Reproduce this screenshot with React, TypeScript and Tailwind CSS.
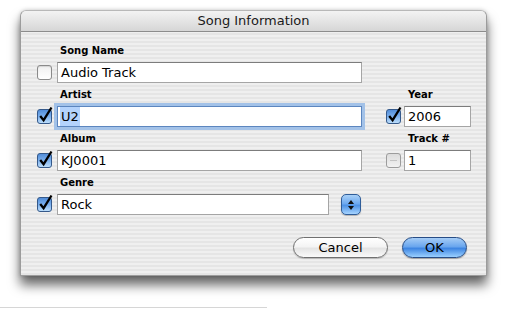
import React from "react";

const font = { fontFamily: '"DejaVu Sans", "Liberation Sans", sans-serif' };

const CheckOn = () => (
  <div className="relative w-[15px] h-[15px] shrink-0">
    <svg width="18" height="19" viewBox="0 0 18 19" className="absolute left-0 top-[-3px] overflow-visible">
      <defs>
        <linearGradient id="aqcb" x1="0" y1="0" x2="0" y2="1">
          <stop offset="0" stopColor="#4f8ad6" />
          <stop offset="0.45" stopColor="#76acec" />
          <stop offset="1" stopColor="#c0e0fb" />
        </linearGradient>
      </defs>
      <rect x="0.5" y="3.5" width="14" height="14" rx="2.5" fill="url(#aqcb)" stroke="#35598a" />
      <path d="M3.2 10 L6.6 14.2 L14.5 1.5" stroke="#000" strokeWidth="2.3" fill="none" strokeLinejoin="miter" />
    </svg>
  </div>
);

const CheckOff = ({ dim }: { dim?: boolean }) => (
  <div
    className={
      dim
        ? "w-[15px] h-[15px] shrink-0 rounded-[3px] border border-[#9c9c9c] bg-gradient-to-b from-[#dcdcdc] to-[#f2f2f2] flex items-center justify-center"
        : "w-[15px] h-[15px] shrink-0 rounded-[3px] border border-[#8a8a8a] bg-gradient-to-b from-[#f0f0f0] to-white shadow-[inset_0_1px_1px_rgba(0,0,0,0.12)]"
    }
  >
    {dim ? <div className="w-[7px] h-[1px] bg-[#c4c4c4]" /> : null}
  </div>
);

const Field = ({ w, children, focus }: { w: string; children?: React.ReactNode; focus?: boolean }) => (
  <div
    className={
      (focus
        ? "border border-[#5c86bf] shadow-[0_0_0_3px_#a3c2e8] "
        : "border border-[#a5a5a5] border-t-[#7c7c7c] ") +
      w +
      " h-[21px] bg-white flex items-center pl-[3px] text-[13px] text-black shrink-0"
    }
  >
    {children}
  </div>
);

const Label = ({ children }: { children: React.ReactNode }) => (
  <div className="text-[10px] font-bold leading-[13px] text-black">{children}</div>
);

export default function App() {
  return (
    <div className="w-[513px] h-[309px] bg-white relative overflow-hidden" style={font}>
      <div className="pl-[20px] pt-[10px]">
        <div className="w-[467px] h-[266px] rounded-t-[6px] border border-[#9c9c9c] border-t-[#b8b8b8] shadow-[0_9px_12px_rgba(0,0,0,0.6),0_0_4px_rgba(0,0,0,0.2)] bg-[repeating-linear-gradient(to_bottom,#efefef_0px,#efefef_2px,#e5e5e5_2px,#e5e5e5_4px)] flex flex-col">
          <div className="h-[21px] rounded-t-[6px] border-b border-[#8c8c8c] bg-gradient-to-b from-[#f3f3f3] to-[#d6d6d6] flex items-center justify-center text-[13px] text-[#1a1a1a]">
            Song Information
          </div>
          <div className="pl-[16px] pt-[12px] flex flex-col">
            <div className="pl-[23px]"><Label>Song Name</Label></div>
            <div className="flex items-center mt-[5px] gap-[5px]">
              <CheckOff />
              <Field w="w-[305px]">Audio Track</Field>
            </div>
            <div className="flex mt-[5px]">
              <div className="pl-[23px] w-[371px]"><Label>Artist</Label></div>
              <Label>Year</Label>
            </div>
            <div className="flex items-center mt-[5px]">
              <CheckOn />
              <div className="ml-[5px]">
                <Field w="w-[305px]" focus>
                  <span className="bg-[#b4d3fc] px-[1px] -ml-[1px]">U2</span>
                </Field>
              </div>
              <div className="ml-[24px]"><CheckOn /></div>
              <div className="ml-[3px]"><Field w="w-[67px]">2006</Field></div>
            </div>
            <div className="flex mt-[5px]">
              <div className="pl-[23px] w-[371px]"><Label>Album</Label></div>
              <Label>Track #</Label>
            </div>
            <div className="flex items-center mt-[5px]">
              <CheckOn />
              <div className="ml-[5px]"><Field w="w-[305px]">KJ0001</Field></div>
              <div className="ml-[24px]"><CheckOff dim /></div>
              <div className="ml-[3px]"><Field w="w-[67px]">1</Field></div>
            </div>
            <div className="pl-[23px] mt-[5px]"><Label>Genre</Label></div>
            <div className="flex items-center mt-[5px]">
              <CheckOn />
              <div className="ml-[5px]"><Field w="w-[272px]">Rock</Field></div>
              <div className="ml-[12px] w-[20px] h-[21px] rounded-[5px] border border-[#2f5d99] bg-[linear-gradient(to_bottom,#a9d0f7_0%,#6eaaf0_45%,#4f93e6_55%,#a6d4ff_100%)] flex flex-col items-center justify-center gap-[2px] shadow-[0_1px_1px_rgba(0,0,0,0.25)]">
                <svg width="6" height="4" viewBox="0 0 6 4"><path d="M3 0 L6 4 L0 4 Z" fill="#111" /></svg>
                <svg width="6" height="4" viewBox="0 0 6 4"><path d="M0 0 L6 0 L3 4 Z" fill="#111" /></svg>
              </div>
            </div>
          </div>
          <div className="flex justify-end pr-[19px] mt-[22px] gap-[14px]">
            <div className="w-[95px] h-[21px] rounded-full border border-[#707070] bg-[linear-gradient(to_bottom,#ffffff_0%,#f4f4f4_45%,#e4e4e4_55%,#fafafa_100%)] flex items-center justify-center text-[13px] text-black shadow-[0_1px_1px_rgba(0,0,0,0.2)]">
              Cancel
            </div>
            <div className="w-[65px] h-[21px] rounded-full border border-[#274d86] bg-[linear-gradient(to_bottom,#a6cdf6_0%,#6aa6ee_45%,#3f86e2_55%,#9ad0ff_100%)] flex items-center justify-center text-[13px] text-black shadow-[0_1px_1px_rgba(0,0,0,0.3)]">
              OK
            </div>
          </div>
        </div>
      </div>
      <div className="absolute left-0 top-[307px] w-[267px] h-[1px] bg-[#d6d6d6]" />
    </div>
  );
}
